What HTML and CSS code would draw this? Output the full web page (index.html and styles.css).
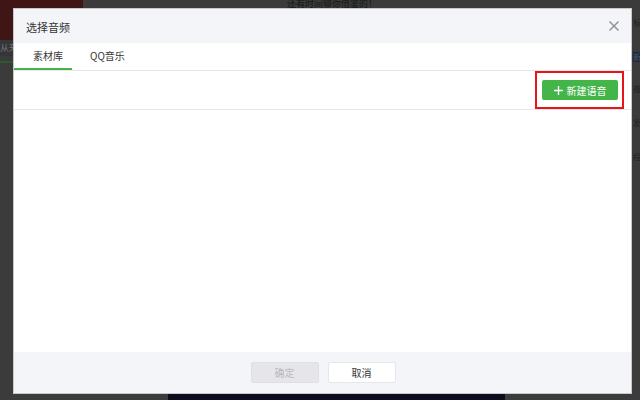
FILE: index.html
```html
<!DOCTYPE html>
<html lang="zh">
<head>
<meta charset="utf-8">
<title>选择音频</title>
<link rel="stylesheet" href="styles.css">
</head>
<body>
<div class="page">
  <div class="bg-banner"></div>
  <div class="bg-band">从来</div>
  <div class="bg-green"></div>
  <div class="bg-headline">还有时间够你借鉴的！</div>
  <div class="bg-video"></div>
  <div class="bg-side s1">标</div>
  <div class="bg-side s2">新</div>
  <div class="bg-side s3">推</div>
  <div class="bg-side s4">发</div>
  <div class="bg-side s5">程</div>

  <div class="dialog">
    <div class="dlg-head">
      <span class="dlg-title">选择音频</span>
      <svg class="dlg-close" width="10" height="10" viewBox="0 0 10 10"><path d="M0.5 0.5L9.5 9.5M9.5 0.5L0.5 9.5" stroke="#8d8d8d" stroke-width="1.4" fill="none"/></svg>
    </div>
    <div class="tabs">
      <div class="tab active">素材库</div>
      <div class="tab">QQ音乐</div>
    </div>
    <div class="toolbar">
      <div class="highlight">
        <button class="btn-new"><svg class="plus" width="9" height="9" viewBox="0 0 9 9"><path d="M4.5 0V9M0 4.5H9" stroke="#fff" stroke-width="1.4"/></svg>新建语音</button>
      </div>
    </div>
    <div class="dlg-body"></div>
    <div class="dlg-foot">
      <button class="btn btn-ok">确定</button>
      <button class="btn btn-cancel">取消</button>
    </div>
  </div>
</div>
</body>
</html>
```
FILE: styles.css
```css
html, body {
  margin: 0;
  padding: 0;
}
body {
  width: 640px;
  height: 400px;
  overflow: hidden;
  background: #3b3b3b;
  font-family: "Noto Sans CJK SC", "Noto Sans", sans-serif;
}
.page {
  position: relative;
  width: 640px;
  height: 400px;
  padding-top: 8px;
  padding-left: 13px;
  box-sizing: border-box;
}
.bg-banner {
  position: absolute;
  left: 0; top: 0;
  width: 83px; height: 40px;
  background: #3f1515;
}
.bg-band {
  position: absolute;
  left: 0; top: 40px;
  width: 83px; height: 16px;
  background: #343638;
  color: #777;
  font-size: 9px;
  line-height: 16px;
}
.bg-green {
  position: absolute;
  left: 0; top: 61px;
  width: 13px; height: 2px;
  background: #2b5a2e;
}
.bg-headline {
  position: absolute;
  left: 287px; top: 0;
  font-size: 9px;
  line-height: 8px;
  color: #151515;
}
.bg-video {
  position: absolute;
  left: 168px; top: 394px;
  width: 337px; height: 6px;
  background: #0d0c1e;
}
.bg-side {
  position: absolute;
  left: 633px;
  font-size: 8px;
  color: #222;
  line-height: 10px;
}
.s1 { top: 18px; }
.s2 { top: 52px; background: #1c2a44; color: #555; }
.s3 { top: 84px; }
.s4 { top: 118px; }
.s5 { top: 152px; }

.dialog {
  position: relative;
  width: 619px;
  height: 386px;
  background: #fff;
  border: 1px solid #c8c8c8;
  box-sizing: border-box;
  display: flex;
  flex-direction: column;
}
.dlg-head {
  height: 34px;
  flex: none;
  background: #f4f5f9;
  display: flex;
  align-items: center;
  justify-content: space-between;
  padding: 0 12px 0 12px;
}
.dlg-title {
  font-size: 11px;
  color: #353535;
  line-height: 14px;
  padding-top: 2px;
}
.dlg-close {
  display: block;
}
.tabs {
  height: 28px;
  flex: none;
  display: flex;
  border-bottom: 1px solid #e7e7eb;
  box-sizing: border-box;
}
.tab {
  font-size: 10px;
  color: #353535;
  line-height: 26px;
  padding: 0 18px;
  border-bottom: 2px solid transparent;
}
.tab.active {
  width: 58px;
  box-sizing: border-box;
  padding: 0 0 0 19px;
  border-bottom-color: #44b549;
}
.toolbar {
  height: 39px;
  flex: none;
  display: flex;
  justify-content: flex-end;
  align-items: center;
  border-bottom: 1px solid #e7e7eb;
  box-sizing: border-box;
  padding-right: 7px;
}
.highlight {
  border: 2px solid #e8141c;
  padding: 7px 4px 7px 5px;
  display: flex;
}
.btn-new {
  width: 76px;
  height: 20px;
  border: none;
  border-radius: 2px;
  background: #44b549;
  color: #fff;
  font-family: inherit;
  font-size: 10px;
  padding: 0;
  display: flex;
  align-items: center;
  justify-content: center;
  gap: 4px;
}
.plus {
  display: block;
}
.dlg-body {
  flex: 1;
}
.dlg-foot {
  height: 41px;
  flex: none;
  background: #f4f5f9;
  display: flex;
  justify-content: center;
  align-items: center;
  gap: 9px;
  padding-left: 1px;
}
.btn {
  width: 68px;
  height: 21px;
  border-radius: 2px;
  font-family: inherit;
  font-size: 10px;
  padding: 0;
}
.btn-ok {
  background: #e6e6ea;
  border: 1px solid #e0e0e4;
  color: #b9b9bd;
}
.btn-cancel {
  background: #fff;
  border: 1px solid #e6e7ea;
  color: #353535;
}
```
